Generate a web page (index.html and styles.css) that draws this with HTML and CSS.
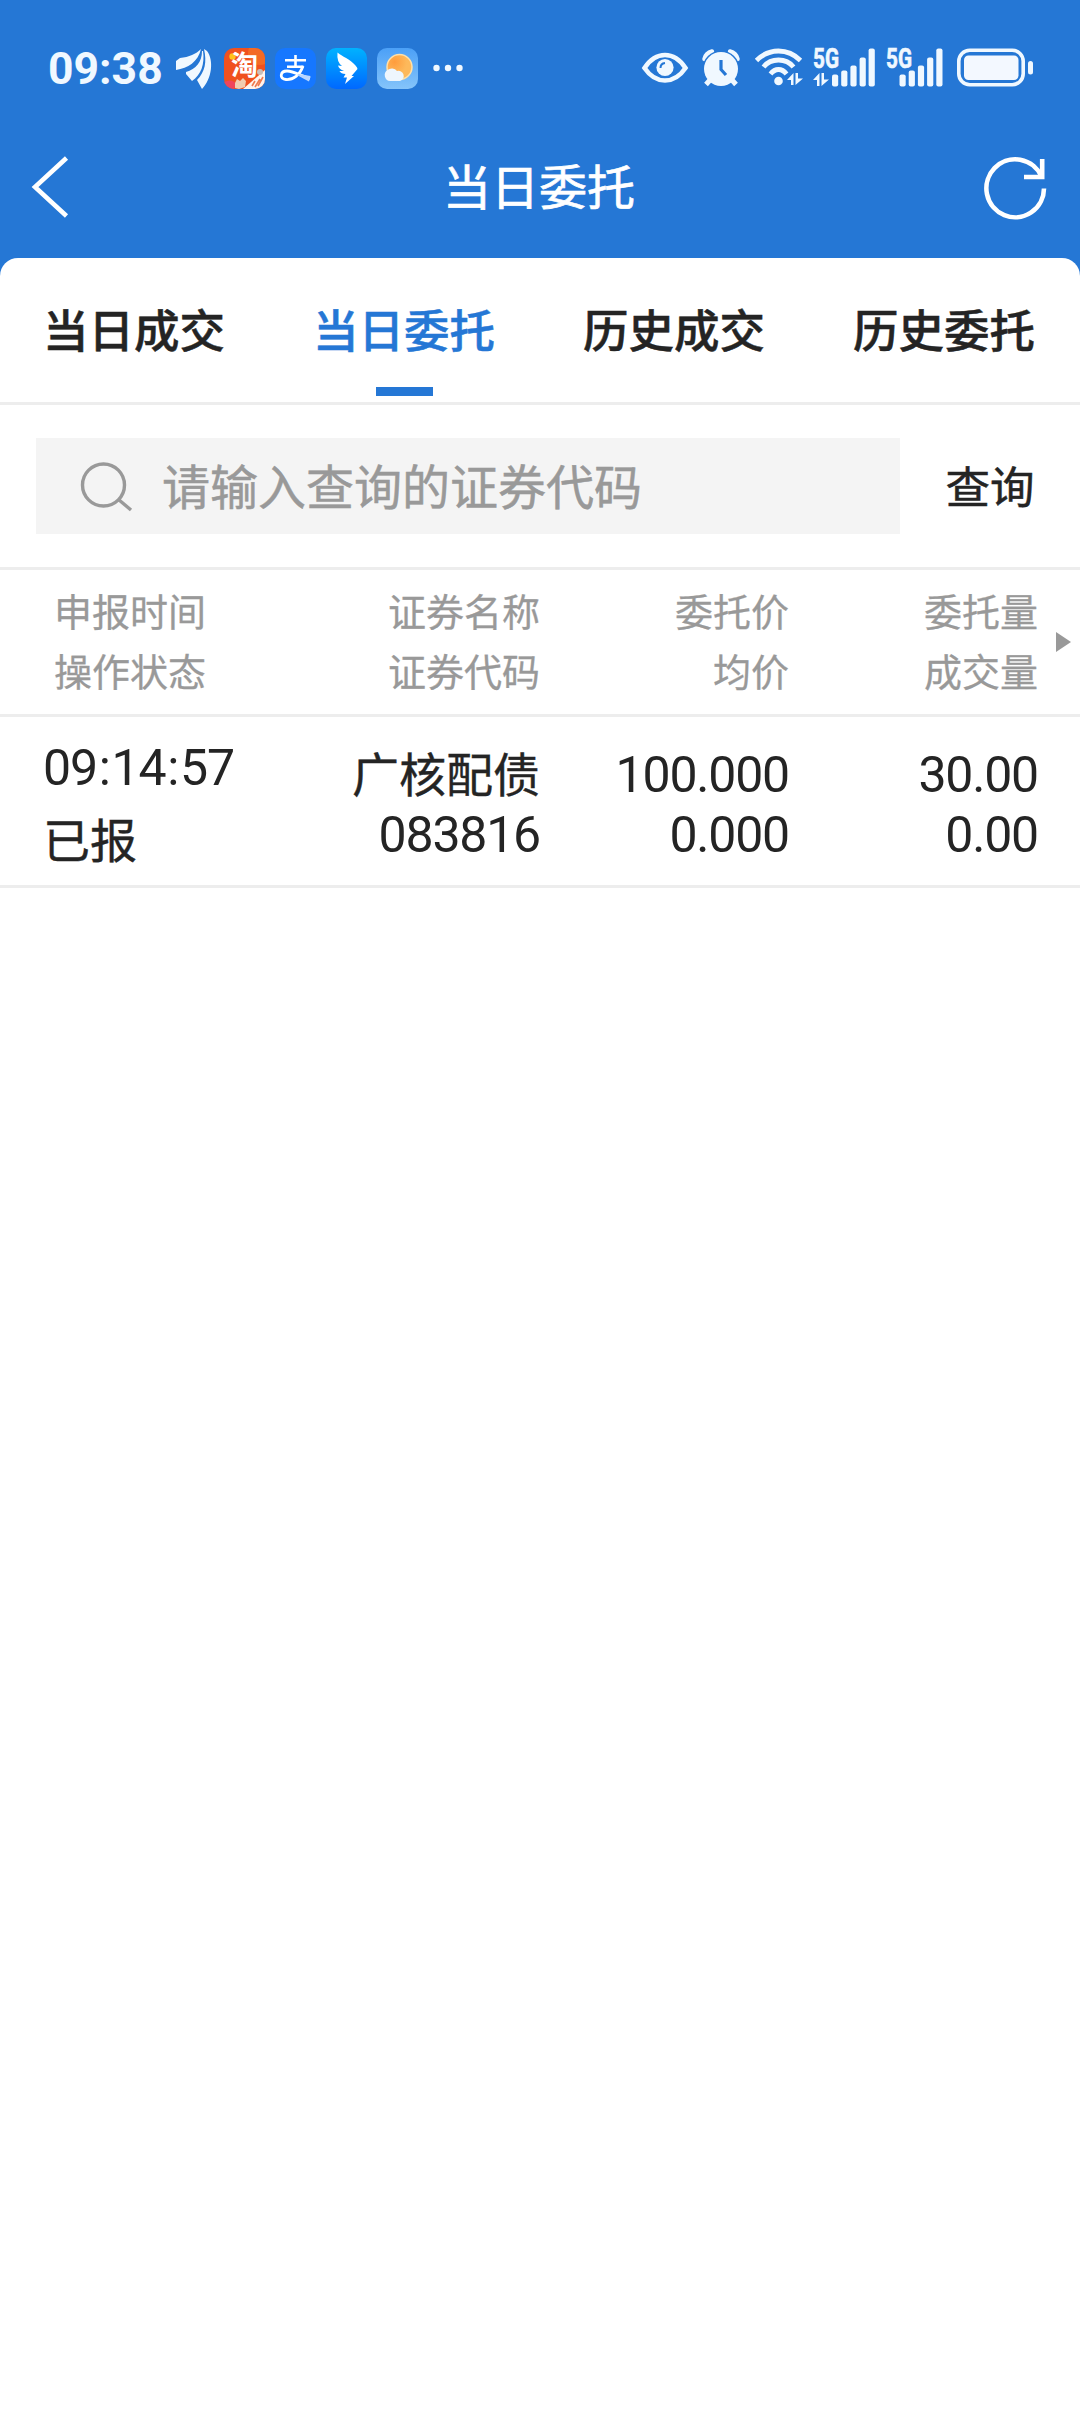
FILE: index.html
```html
<!DOCTYPE html>
<html lang="zh-CN">
<head>
<meta charset="utf-8">
<title>当日委托</title>
<link rel="stylesheet" href="styles.css">
</head>
<body>
<header class="top">
  <div class="status">
    <div class="status-left">
      <span class="clock">09:38</span>
      <svg class="wing" width="36" height="42" viewBox="0 0 36 42" fill="#f0f8ff">
        <path d="M25 1C20 6 13 9 4 10L0 13V22C12 20 22 14 25 1Z"/>
        <path d="M26 3C26 14 20 21 10 24L10 26L16 33C25 27 29 16 27 3Z"/>
        <path d="M28 1C31 14 29 24 21 32L26 41C36 31 38 12 31 3Z"/>
      </svg>
      <svg class="app" width="41" height="41" viewBox="0 0 41 41">
        <defs><clipPath id="tile"><rect width="41" height="41" rx="10"/></clipPath></defs>
        <g clip-path="url(#tile)">
          <rect width="41" height="41" fill="#f0511f"/>
          <circle cx="36" cy="5" r="12" fill="#f36a25"/>
          <circle cx="8.500" cy="8.500" r="3.200" fill="#ffc21c"/>
          <path d="M41 22V41H19Z" fill="#fff3ec"/>
          <path d="M0 34Q8 30 12 36L10 41H0Z" fill="#f0455c"/>
          <path d="M11 35L13 31L16 33L19 30L22 33L21 39L15 41L11 40Z" fill="#f2cdb0"/>
          <path d="M28 38L31 33M31 39L36 31M34 38L39 29" stroke="#ef7a4e" stroke-width="1.600"/>
          <circle cx="36" cy="24" r="3" fill="#c9beb8"/>
        </g>
        <text class="tao" x="20.500" y="27" text-anchor="middle">淘</text>
      </svg>
      <svg class="app" width="41" height="41" viewBox="0 0 41 41">
        <rect width="41" height="41" rx="10" fill="#1677ff"/>
        <g fill="none" stroke="#fff" stroke-width="2.600">
          <path d="M10 12.200H31M20.500 7V19M12 18.800H28.500"/>
          <path d="M28 18C25 27 18 32 11 31.500C4 31 5 23 12 23C19 23 26 28 35 30.500" stroke-width="2.800"/>
        </g>
        <path d="M24 26L35.500 28L34 33.500Q29 31 22 27Z" fill="#b9d6ff"/>
      </svg>
      <svg class="app" width="41" height="41" viewBox="0 0 41 41">
        <defs><linearGradient id="ding" x2="0" y2="1"><stop stop-color="#00b2ff"/><stop offset="1" stop-color="#0068ff"/></linearGradient></defs>
        <rect width="41" height="41" rx="10" fill="url(#ding)"/>
        <path d="M11.500 4.500C16 8.500 24 11 29.500 17.500Q31.500 19.500 31.500 21L25.500 28H28L19 36L21 29.500H17.500L19.500 26Q15 26 13.500 23L18 23Q13 21 12 17.500L16 18Q10.500 14 11.500 4.500Z" fill="#fff"/>
      </svg>
      <svg class="app" width="41" height="41" viewBox="0 0 41 41">
        <defs>
          <linearGradient id="sky" x2="0" y2="1"><stop stop-color="#4ba0f7"/><stop offset="1" stop-color="#85c4fa"/></linearGradient>
          <radialGradient id="sun" cx=".3" cy=".3"><stop stop-color="#ff9c3c"/><stop offset="1" stop-color="#fdb95b"/></radialGradient>
        </defs>
        <rect width="41" height="41" rx="10" fill="url(#sky)"/>
        <circle cx="22.500" cy="19" r="12.500" fill="url(#sun)" stroke="#ffe0a8" stroke-width="1.500"/>
        <path d="M13 33A6 6 0 0 1 10.500 22A6.500 6.500 0 0 1 20 23A5 5 0 0 1 23 33Z" fill="#eef6fd"/>
      </svg>
      <svg class="dots" width="30" height="8" viewBox="0 0 30 8" fill="#f0f8ff"><circle cx="3.500" cy="4" r="3.200"/><circle cx="15" cy="4" r="3.200"/><circle cx="26.500" cy="4" r="3.200"/></svg>
    </div>
    <div class="status-right">
      <svg class="eye" width="46" height="32" viewBox="0 0 46 32">
        <path d="M2.500 16Q11 3 23 3T43.500 16Q35 28.500 23 28.500T2.500 16Z" fill="none" stroke="#f0f8ff" stroke-width="4.600"/>
        <circle cx="23" cy="15.500" r="8.600" fill="#f0f8ff"/>
        <path d="M18.500 16Q18.500 11.500 23 11" fill="none" stroke="#2577d5" stroke-width="2"/>
      </svg>
      <svg class="alarm" width="38" height="38" viewBox="0 0 38 38">
        <path d="M2.500 10Q4 4 10 2.500M28 2.500Q34 4 35.500 10" fill="none" stroke="#f0f8ff" stroke-width="4.500" stroke-linecap="round"/>
        <circle cx="19" cy="20" r="18.500" fill="#2577d5"/>
        <circle cx="19" cy="20" r="17" fill="#f0f8ff"/>
        <path d="M8 31L4 35.500M30 31L34 35.500" stroke="#f0f8ff" stroke-width="5"/>
        <path d="M19 11V20.500L24 26" fill="none" stroke="#2577d5" stroke-width="3.200"/>
      </svg>
      <svg class="wifi" width="49" height="38" viewBox="0 0 49 38">
        <g fill="none" stroke="#f0f8ff" stroke-width="4.800">
          <path d="M1.500 12.500Q11 3 23.500 3T45.500 12.500"/>
          <path d="M8.500 19Q14 12 23.500 12T38.500 19"/>
          <path d="M15.500 26Q19 21.500 23.500 21.500T31.500 26"/>
        </g>
        <circle cx="23.500" cy="33" r="4.300" fill="#f0f8ff"/>
        <path d="M32 32L38.500 25V37H36V32ZM40.500 25V37L48 30.500H43V25Z" fill="#f0f8ff"/>
      </svg>
      <svg class="signal" width="63" height="40" viewBox="0 0 63 40" fill="#f0f8ff">
        <text class="net" x="0" y="20" textLength="26" lengthAdjust="spacingAndGlyphs">5G</text>
        <path d="M0 32L6.500 25V38H4V32ZM8.500 25V38L16 31.500H11V25Z"/>
        <rect x="19" y="26.500" width="6.200" height="12" rx="2"/><rect x="28.200" y="22.500" width="6.200" height="16" rx="2"/><rect x="37.400" y="17.500" width="6.200" height="21" rx="2"/><rect x="46.600" y="9.500" width="6.200" height="29" rx="2"/><rect x="55.600" y=".5" width="6.200" height="38" rx="2"/>
      </svg>
      <svg class="signal-two" width="58" height="40" viewBox="0 0 58 40" fill="#f0f8ff">
        <text class="net" x="0" y="20" textLength="26" lengthAdjust="spacingAndGlyphs">5G</text>
        <rect x="13.500" y="26.500" width="6.200" height="12" rx="2"/><rect x="22.700" y="22.500" width="6.200" height="16" rx="2"/><rect x="31.900" y="17.500" width="6.200" height="21" rx="2"/><rect x="41.100" y="9.500" width="6.200" height="29" rx="2"/><rect x="50.300" y=".5" width="6.200" height="38" rx="2"/>
      </svg>
      <svg class="battery" width="76" height="39" viewBox="0 0 76 39">
        <rect x="1.800" y="2.300" width="64.400" height="34.400" rx="11" fill="none" stroke="#f0f8ff" stroke-width="3.600"/>
        <rect x="7" y="7.500" width="54.500" height="24.500" rx="4.500" fill="#f3f8ff"/>
        <rect x="71" y="13" width="5" height="13.500" rx="2.500" fill="#f0f8ff"/>
      </svg>
    </div>
  </div>
  <div class="bar">
    <svg width="37" height="62" viewBox="0 0 37 62" fill="none" stroke="#fff" stroke-width="4.600"><path d="M34.500 2L3 31L34.500 60"/></svg>
    <h1 class="title">当日委托</h1>
    <svg width="64" height="64" viewBox="0 0 64 64" fill="none" stroke="#fff" stroke-width="4.600"><path d="M61 33.500A28.800 29 0 1 1 58.500 21.500"/><path d="M59.200 4V22H41"/></svg>
  </div>
</header>
<main class="sheet">
  <nav class="tabs">
    <a class="tab">当日成交</a>
    <a class="tab active">当日委托</a>
    <a class="tab">历史成交</a>
    <a class="tab">历史委托</a>
  </nav>
  <section class="search">
    <div class="field">
      <svg width="53" height="50" viewBox="0 0 53 50" fill="none" stroke="#999" stroke-width="3.400"><circle cx="23.500" cy="24" r="21"/><path d="M38.500 38.500L51 49"/></svg>
      <span class="hint">请输入查询的证券代码</span>
    </div>
    <button class="query">查询</button>
  </section>
  <section class="row head">
    <div class="cell"><span>申报时间</span><span>操作状态</span></div>
    <div class="cell"><span>证券名称</span><span>证券代码</span></div>
    <div class="cell"><span>委托价</span><span>均价</span></div>
    <div class="cell"><span>委托量</span><span>成交量</span></div>
    <div class="more"></div>
  </section>
  <section class="row order">
    <div class="cell"><span class="num time">09<i>:</i>14<i>:</i>57</span><span class="word">已报</span></div>
    <div class="cell"><span class="word">广核配债</span><span class="num">083816</span></div>
    <div class="cell"><span class="num">100.000</span><span class="num">0.000</span></div>
    <div class="cell"><span class="num">30.00</span><span class="num">0.00</span></div>
  </section>
</main>
</body>
</html>
```
FILE: styles.css
```css
* { box-sizing: border-box; }
body {
  margin: 0;
  min-height: 2412px;
  background: #fff;
  color: #242424;
  font-family: "Noto Sans CJK SC", sans-serif;
}
svg { display: block; flex: none; overflow: visible; }
.top { height: 276px; background: #2577d5; color: #fff; }
.status {
  display: flex;
  justify-content: space-between;
  height: 116px;
  padding: 48px 47px 0 48px;
}
.status-left, .status-right { display: flex; align-items: flex-start; }
.clock {
  width: 128px;
  font: 700 44.5px/42px Roboto, sans-serif;
  color: #f0f8ff;
}
.wing { margin-right: 12px; }
.app { margin-right: 10px; }
.tao { font: 700 27px "Noto Sans CJK SC", sans-serif; fill: #fff; }
.dots { margin: 16px 0 0 5px; }
.eye { margin: 4px 14px 0 0; }
.alarm { margin: 1px 15px 0 0; }
.wifi { margin-right: 9px; }
.net { font: 700 27px Roboto, sans-serif; stroke: #f0f8ff; stroke-width: .6px; }
.signal { margin-right: 10px; }
.signal-two { margin-right: 13px; }
.bar {
  display: flex;
  align-items: center;
  justify-content: space-between;
  height: 142px;
  padding: 0 33px 0 32px;
}
.title {
  margin: 0 0 0 26px;
  padding-bottom: 7px;
  font-size: 48px;
  font-weight: 400;
  line-height: 70px;
  -webkit-text-stroke: .7px;
}
.sheet { margin-top: -18px; border-radius: 18px 18px 0 0; background: #fff; }
.tabs {
  display: grid;
  grid-template-columns: repeat(4, 270px);
  height: 147px;
  border-bottom: 3px solid #ededed;
}
.tab {
  display: flex;
  flex-direction: column;
  align-items: center;
  justify-content: space-between;
  padding: 38px 2px 6px 0;
  font-size: 45.5px;
  font-weight: 500;
  line-height: 64px;
  -webkit-text-stroke: .5px;
}
.active { color: #2577d5; }
.active::after { content: ""; width: 57px; height: 9px; background: #2577d5; }
.search {
  display: flex;
  align-items: center;
  height: 165px;
  padding-left: 36px;
  border-bottom: 3px solid #ededed;
}
.field {
  display: flex;
  align-items: center;
  gap: 29px;
  width: 864px;
  height: 96px;
  padding-left: 44px;
  background: #f4f4f4;
  color: #999;
  font-size: 48px;
}
.hint { padding-bottom: 5px; -webkit-text-stroke: .5px; }
.query {
  width: 180px;
  padding: 0 0 3px;
  border: 0;
  background: none;
  color: #242424;
  font: 400 44.5px "Noto Sans CJK SC", sans-serif;
  -webkit-text-stroke: .5px;
}
.row {
  display: grid;
  grid-template-columns: 240px 300px 249px 249px 42px;
  border-bottom: 3px solid #ededed;
}
.cell { display: flex; flex-direction: column; align-items: flex-end; line-height: 60px; }
.head { height: 147px; padding-top: 10px; color: #999; font-size: 38px; -webkit-text-stroke: .3px; }
.head .cell:first-child { align-items: flex-start; padding-left: 54px; }
.more {
  width: 15px;
  height: 20px;
  margin: 52px 0 0 18px;
  background: #999;
  clip-path: polygon(0 0, 100% 50%, 0 100%);
}
.order { height: 171px; padding-top: 28px; font-size: 47px; }
.order .cell:first-child { align-items: flex-start; padding-left: 43px; }
.num { font-family: Roboto, sans-serif; font-size: 50px; letter-spacing: -1.2px; }
.num i { font-style: normal; padding: 0 1.8px 0 2px; }
.time { height: 66px; line-height: 46px; }
.word { height: 60px; line-height: 54px; -webkit-text-stroke: .4px; }
```
